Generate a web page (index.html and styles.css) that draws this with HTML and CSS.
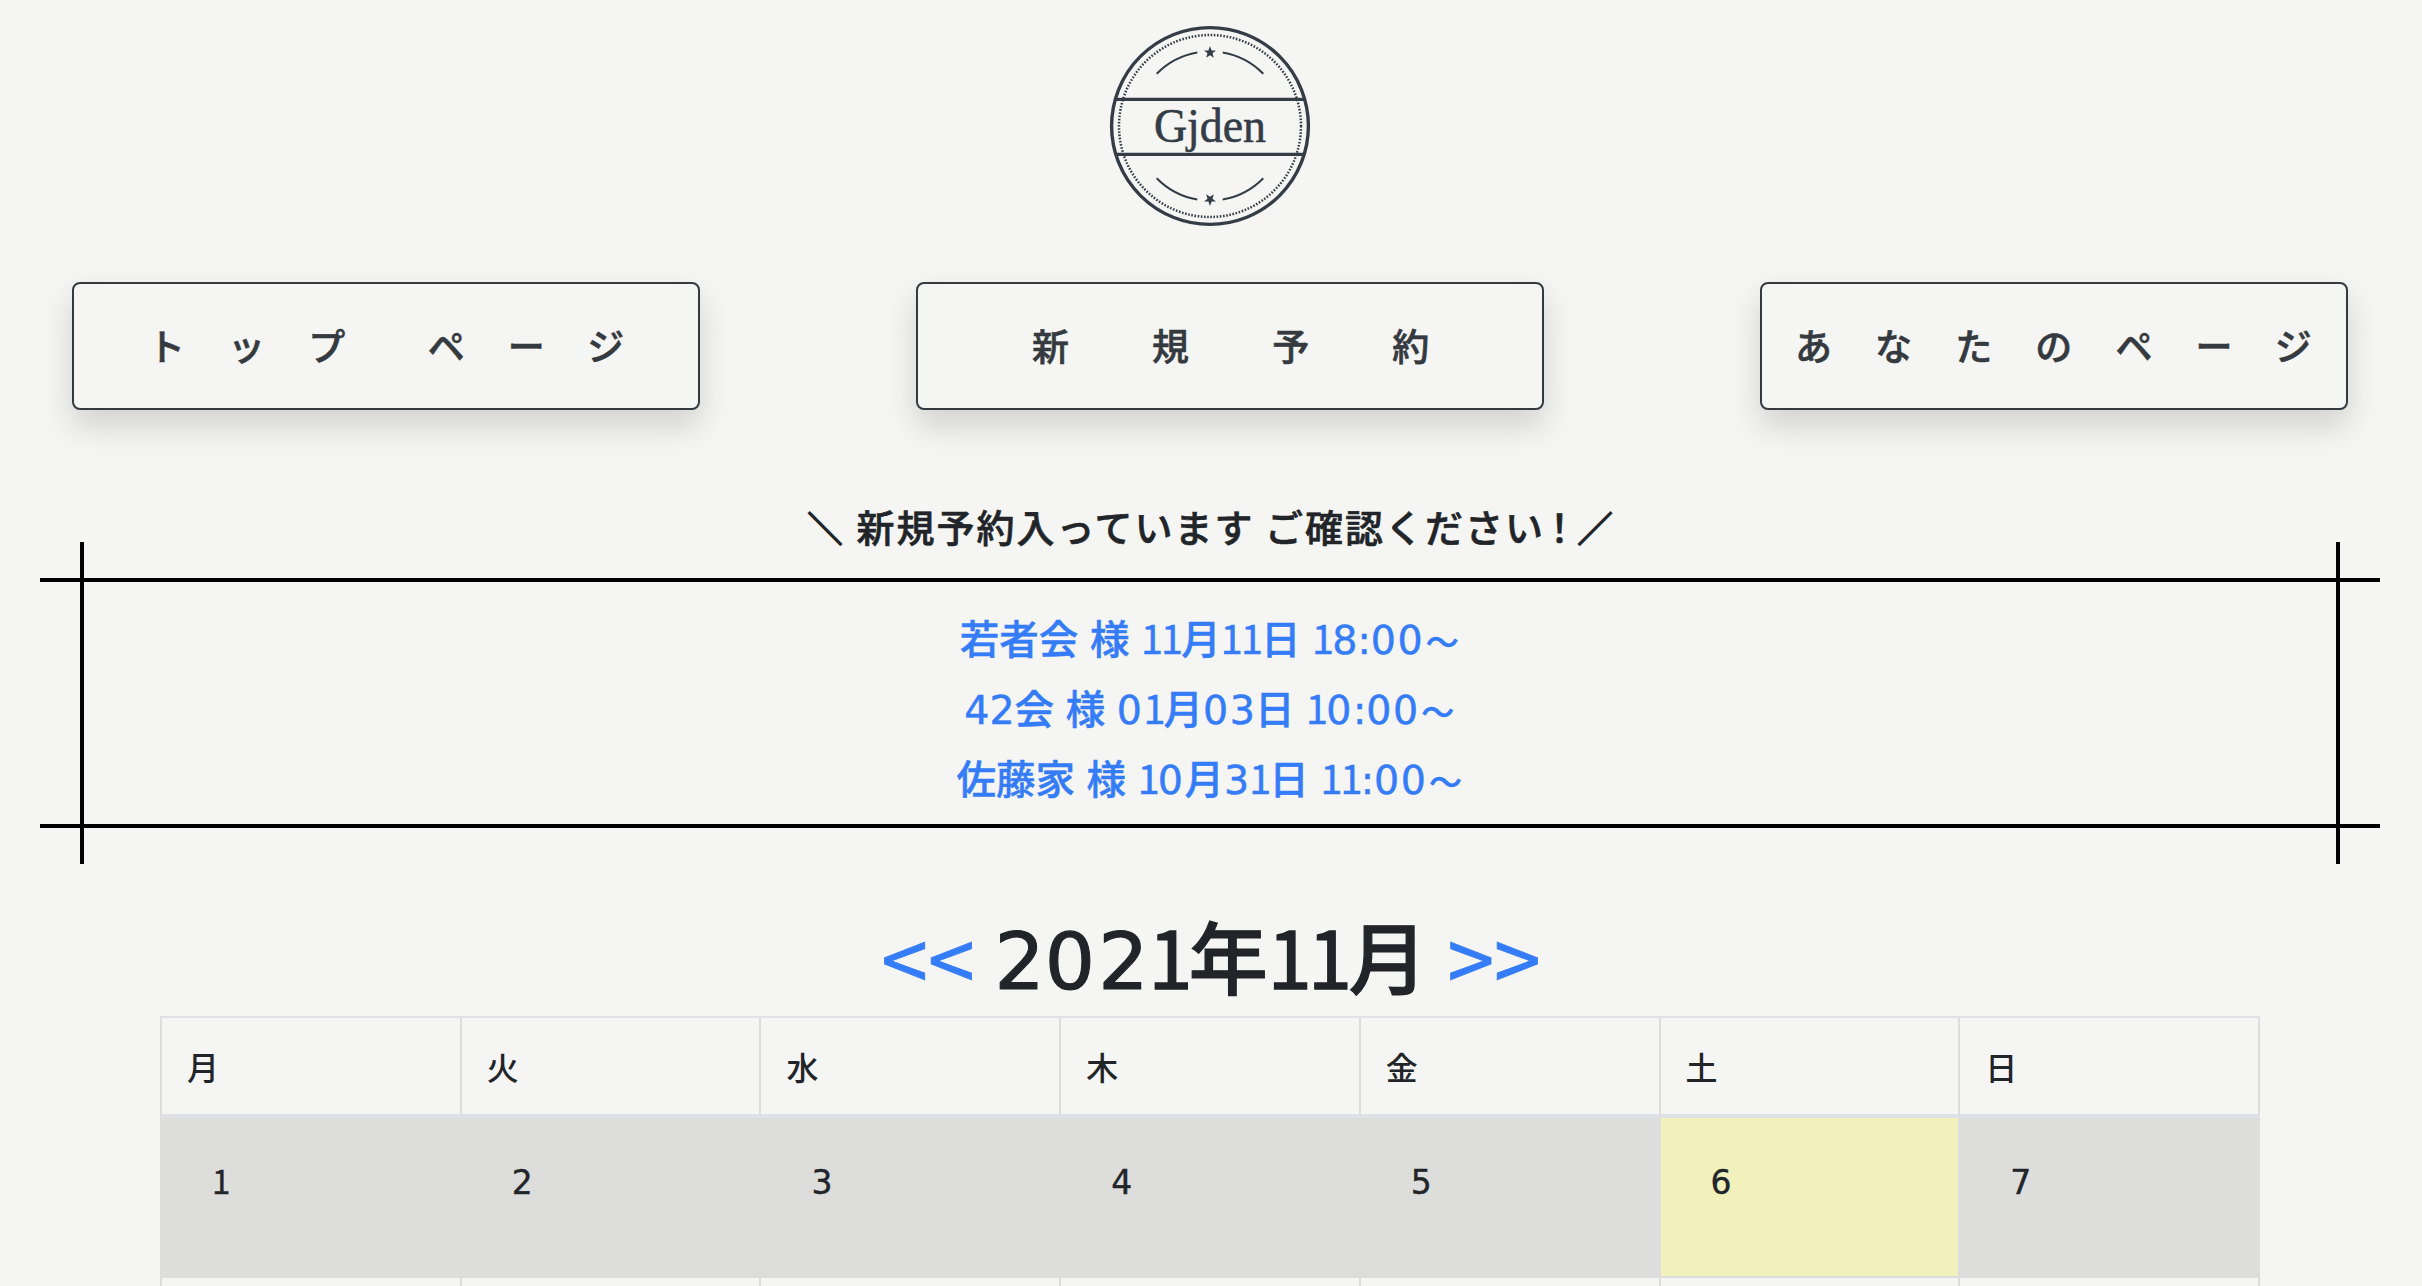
FILE: index.html
```html
<!DOCTYPE html>
<html lang="ja">
<head>
<meta charset="utf-8">
<title>Gjden</title>
<link rel="stylesheet" href="styles.css">
</head>
<body>
<header class="header">
  <svg class="logo" viewBox="-101 -101 202 202" role="img" aria-label="Gjden">
    <circle r="98.4" class="ring"/>
    <circle r="91" class="dots"/>
    <path class="arc" d="M-53.3-52.3A74.7 74.7 0 0 1-12.7-73.6M12.7-73.6A74.7 74.7 0 0 1 53.3-52.3M-53.3 52.3A74.7 74.7 0 0 0-12.7 73.6M12.7 73.6A74.7 74.7 0 0 0 53.3 52.3"/>
    <path class="star" id="star" d="M0-80l1.6 4.4 4.4.1-3.5 2.8 1.3 4.5L0-70.7l-3.8 2.5 1.3-4.5-3.5-2.8 4.4-.1z"/>
    <use href="#star" class="star" transform="scale(1 -1)"/>
    <path class="band" d="M-95-26.7H95M-95 28.3H95"/>
    <text class="wordmark" x="-56" y="15.5" textLength="112" lengthAdjust="spacingAndGlyphs">Gjden</text>
  </svg>
</header>
<nav class="nav">
  <a class="nav-button top">トップ ページ</a>
  <a class="nav-button new">新規予約</a>
  <a class="nav-button mine">あなたのページ</a>
</nav>
<main>
  <p class="notice"><span class="wing">＼</span> 新規予約入っています ご確認ください<span class="bang">！</span><span class="wing">／</span></p>
  <section class="frame">
    <a class="booking">若者会 様 <i>11</i>月<i>11</i>日 <i>1</i>8:<b>00</b><span class="wave">～</span></a>
    <a class="booking">42会 様 <b>0</b><i>1</i>月<b>0</b>3日 <i>1</i><b>0</b>:<b>00</b><span class="wave">～</span></a>
    <a class="booking">佐藤家 様 <i>1</i><b>0</b>月3<i>1</i>日 <i>11</i>:<b>00</b><span class="wave">～</span></a>
  </section>
  <h1 class="month"><a class="arrow">&lt;&lt;</a><span>2<b>0</b>2<i>1</i>年<i>11</i>月</span><a class="arrow">&gt;&gt;</a></h1>
  <div class="calendar">
    <div class="head">月</div><div class="head">火</div><div class="head">水</div><div class="head">木</div><div class="head">金</div><div class="head">土</div><div class="head">日</div>
    <div class="day past"><i>1</i></div><div class="day past">2</div><div class="day past">3</div><div class="day past">4</div><div class="day past">5</div><div class="day today">6</div><div class="day past">7</div>
    <div class="next"></div><div class="next"></div><div class="next"></div><div class="next"></div><div class="next"></div><div class="next"></div><div class="next"></div>
  </div>
</main>
</body>
</html>
```
FILE: styles.css
```css
* { box-sizing: border-box; }
body {
  margin: 0;
  background: #f5f5f3;
  color: #212529;
  font-family: "Noto Sans CJK JP", sans-serif;
  font-weight: 500;
  font-size: 32px;
  line-height: 48px;
}
/* the figure one is set tight and the zero loose */
i { font-family: "Noto Sans CJK JP", sans-serif; font-style: normal; font-weight: 400; line-height: 1; letter-spacing: -.045em; }
b { font-weight: inherit; letter-spacing: .04em; }

.header { display: flex; justify-content: center; padding-top: 25px; height: 282px; }
.logo { width: 202px; height: 202px; margin-right: 2px; }
.ring { fill: none; stroke: #343d47; stroke-width: 3.4; }
.dots { fill: none; stroke: #343d47; stroke-width: 2.5; stroke-dasharray: 1.6 1.6; }
.arc { fill: none; stroke: #343d47; stroke-width: 2; }
.star { fill: #343d47; }
.band { fill: none; stroke: #343d47; stroke-width: 3.2; }
.wordmark { font: 49px "Liberation Serif", serif; fill: #343d47; stroke: #343d47; stroke-width: .6; }

.nav { display: flex; gap: 216px; padding-left: 72px; }
.nav-button {
  width: 628px;
  height: 128px;
  border: 2px solid #343a40;
  border-radius: 8px;
  box-shadow: 0 16px 32px rgba(0, 0, 0, .15);
  color: #343a40;
  font-size: 37px;
  line-height: 123px;
  letter-spacing: 43.1px;
  white-space: nowrap;
  -webkit-text-stroke: .6px;
}
.top { padding-left: 74px; word-spacing: -12px; }
.new { padding-left: 114px; letter-spacing: 83.1px; }
.mine { width: 588px; padding-left: 33px; }

.notice {
  margin: 86px 0 0;
  height: 82px;
  line-height: 60px;
  font-size: 38px;
  letter-spacing: 2px;
  text-align: center;
  -webkit-text-stroke: .6px;
}
.bang { display: inline-flex; width: 31px; justify-content: center; }
.wing { display: inline-flex; width: 40px; justify-content: center; font-size: 35px; -webkit-text-stroke: 1.6px; }
.frame {
  position: relative;
  display: flex;
  flex-direction: column;
  align-items: center;
  height: 250px;
  margin: 0 42px 0 40px;
  padding-top: 23px;
  border: solid #000;
  border-width: 4px 0;
}
.frame::before {
  content: "";
  position: absolute;
  inset: -40px 40px;
  border: solid #000;
  border-width: 0 4px;
}
.booking, .month span, .day { font-family: "DejaVu Sans", "Noto Sans CJK JP", sans-serif; }
.booking {
  height: 70px;
  font-size: 39.5px;
  line-height: 70px;
  color: #357cf9;
  white-space: nowrap;
  word-spacing: -1px;
  -webkit-text-stroke: .5px;
}
.wave { display: inline-flex; width: 36px; justify-content: center; font-size: 32px; font-weight: 400; line-height: 1; -webkit-text-stroke: 1.2px; }

.month {
  display: flex;
  justify-content: center;
  gap: 20px;
  height: 188px;
  margin: 0;
  padding-top: 74px;
  font-size: 80px;
  font-weight: 500;
  line-height: 120px;
}
.month span { font-size: 79px; -webkit-text-stroke: 1.2px; }
.month i { -webkit-text-stroke: 1.6px; }
.arrow { margin-top: -6px; font-size: 84px; font-weight: 400; color: #357cf9; -webkit-text-stroke: .8px; }

.calendar {
  display: grid;
  grid-template-columns: repeat(7, 1fr);
  grid-template-rows: 100px 160px 8px;
  width: 2100px;
  margin-left: 160px;
  border-top: 2px solid #dee2e6;
  border-left: 2px solid #ddd;
}
.head { padding: 24px 25px; border-right: 2px solid #ddd; border-bottom: 4px solid #dee2e6; }
.day { padding: 41px 50px; border-right: 2px solid #ddd; border-bottom: 2px solid #ddd; font-size: 33px; -webkit-text-stroke: .4px; }
.next { border-right: 2px solid #ddd; }
.past { background: #dddddb; }
.today { background: #f2f1bc; }
```
